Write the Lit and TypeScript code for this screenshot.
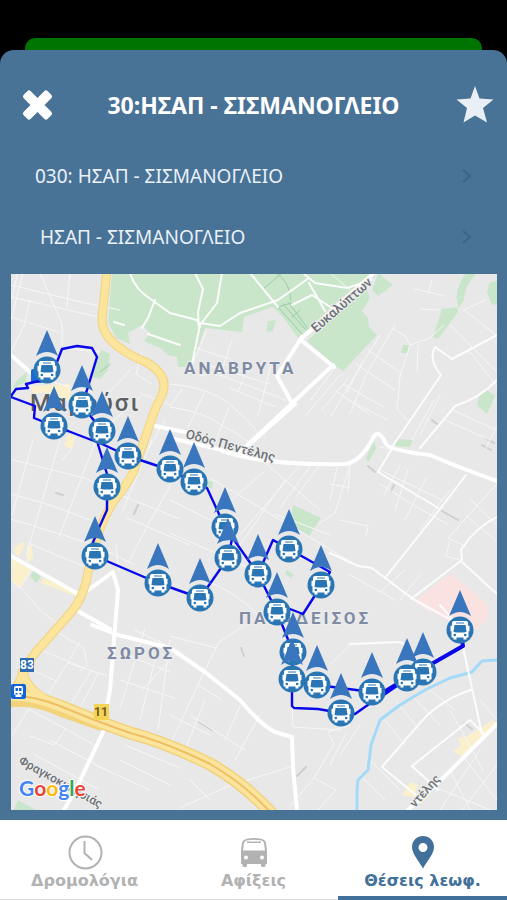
import { LitElement, html, css, svg } from "lit";
import { customElement, state } from "lit/decorators.js";

const PARKS = [
  "M112 273 L108 322 L116 338 L130 344 L128 333 L142 325 L150 333 L144 341 L160 348 L168 355 L177 357 L178 367 L191 367 L205 328 L242 332 L244 317 L273 307 L284 318 L298 338 L340 299 L374 273Z",
  "M307 341 L333 364 L343 371 L377 335 L369 327 L368 318 L362 311 L370 298 L366 288 L340 310Z",
  "M378 273 L393 285 L378 296 L372 290Z",
  "M466 273 Q452 292 459 308 L464 300 Q464 286 477 273Z",
  "M442 309 L457 307 L458 312 L438 339 L433 337Z",
  "M497 281 L490 282 L487 292 L492 305 L497 304Z",
  "M403 345 L409 345 L408 353 L401 353Z",
  "M479 396 L487 390 L495 396 L487 414 L477 405Z",
  "M398 439 L413 440 L410 447 L395 446Z",
  "M374 440 L376 449 L368 462 L366 458Z",
  "M293 505 L321 518 L309 536 L290 523Z",
  "M268 321 L276 320 L273 331 L266 332Z",
  "M101 350 L110 354 L108 370 L100 379 L89 377Z",
  "M17 380 L27 372 L26 382 L12 389Z",
  "M18 800 L36 810 L14 810Z",
  "M287 570 L294 575 L291 578 L285 574Z",
  "M207 480 L213 482 L212 489 L207 487Z",
  "M34 571 L41 577 L36 583 L30 576Z",
];

const PLACES = [
  "M30 386 L70 384 L70 400 L52 404 L46 392 L34 394Z",
  "M68 434 L76 437 L72 449 L64 446Z",
  "M11 558 L31 570 L20 588 L11 580Z",
  "M21 542 L25 543 L19 557 L13 551Z",
  "M27 547 L32 545 L33 557 L27 563Z",
  "M43 578 L80 592 L78 597 L41 583Z",
  "M493 720 L497 724 L464 757 L453 752 L461 746 L458 738 L466 737Z",
  "M410 782 L418 785 L414 797 L402 795Z",
  "M425 792 L431 794 L421 804 L416 802Z",
];

const LANES = [
  "M11 285 L85 303 L120 310 M11 297 L103 318 M18 273 L11 300 M40 273 L62 324 L62 345 M70 273 L67 306",
  "M23 273 L11 320 M11 352 L24 326 L30 300 M11 317 L58 332 M62 348 L100 352 M43 380 L92 392",
  "M11 494 L50 505 L90 520 M11 519 L95 545 L135 565 M13 460 L85 478 L118 494 L180 519",
  "M33 440 L12 515 M60 440 L26 556 M96 440 L59 537 M72 449 L62 460 M28 543 L85 567",
  "M127 518 L190 545 M152 440 L123 510 M180 468 L148 525 L128 563 M116 545 L119 572",
  "M11 581 L22 589 L40 610 L56 623 M20 588 L31 571 M44 651 L84 668 M80 642 L49 693",
  "M56 632 L84 648 L87 665 L80 671 M91 671 L72 702 M98 674 L81 706 M68 663 L107 676 M28 710 L11 737 M28 709 L66 729 L94 745",
  "M66 729 L54 745 L30 736 M32 670 L56 681",
  "M142 352 L136 374 L152 384 M130 370 L104 398 M170 405 L140 393 M165 420 L148 450 M142 395 L110 424",
  "M170 384 Q215 388 235 409 Q252 424 259 434 M182 389 L170 407 M204 393 L188 428 M229 407 L216 441",
  "M170 407 Q205 412 221 425 Q238 433 250 444 M350 290 L330 273 M277 375 L293 406",
  "M196 348 L230 359 M207 330 L193 362 M232 340 L222 370 L200 376 M250 360 L238 392 M271 365 L258 416 M220 375 L286 400 M230 388 L276 407 M210 366 L270 384",
  "M333 370 L310 401 M340 375 L306 415 M347 380 L322 410 M356 364 L395 390 M368 350 L402 374 M380 335 L354 377 L331 416 M395 325 L366 375 L350 414",
  "M343 384 L384 407 M335 390 L370 415 M348 400 L388 420 M362 363 L347 392 M392 328 L405 336 L410 345 L400 376 L397 409 L410 423",
  "M410 345 L430 338 L444 325 M450 325 L497 372 M464 310 L497 336 M463 310 L486 300 M470 352 L497 386",
  "M418 345 L417 372 M415 289 L445 296 M420 309 L440 310 M428 294 L432 280 M434 400 L412 440 M440 395 L420 435",
  "M452 410 L497 430 M445 420 L490 440 M420 456 L380 447 M500 420 L486 448 M380 470 L442 500 M400 465 L384 495",
  "M408 470 L395 510 M426 478 L405 520 M380 484 L415 506 L447 524 M450 490 L420 530 M497 484 L448 538 L465 546",
  "M338 464 L330 500 M350 465 L348 492 M330 484 L350 488 M340 520 L368 526 L366 535 M450 540 L446 556 L460 560",
  "M300 465 L240 535 M311 465 L280 508 M320 465 L296 497 M250 450 L320 510 M210 478 L348 560 M285 480 L240 545 M264 472 L225 505",
  "M350 465 L335 513 L318 524 M275 514 L330 535 M170 533 L245 566 M200 579 Q235 590 258 615 M170 500 L210 520",
  "M245 625 L218 643 L216 648 L204 672 L178 728 L170 744 M216 648 L170 636 M198 685 L222 700",
  "M292 705 L293 727 L340 730 M350 725 L328 732 L334 744 L314 778 L290 806 M314 778 L336 790 L318 810",
  "M293 766 L226 787 L180 808 M240 706 L225 740 M260 715 L235 760 M205 700 L185 750 M190 715 L245 750 M170 715 L210 735",
  "M135 630 L180 652 M127 655 L170 672 M120 680 L175 698 M160 640 L140 720 M145 628 L120 708 M170 640 L158 730",
  "M175 655 L142 690 M120 760 L170 785 M125 745 L180 768 M95 765 L150 790 M35 755 L98 789 M50 740 L110 772 M190 780 L210 800",
  "M330 665 L350 645 M345 735 L330 765 M360 725 L340 755 M397 703 L420 730 M415 699 L440 725 M430 690 L455 710",
  "M385 720 L405 745 M370 760 L400 790 M360 775 L385 800 M450 710 L483 770 M480 700 L497 720",
  "M450 770 L470 810 M463 756 L497 800 M480 750 L440 810 M497 765 L462 810 M430 785 L490 810",
  "M420 575 L400 600 M405 570 L380 592 M350 575 L395 600 M410 595 L430 612 M465 515 L495 540 M471 500 L497 525",
];

const STREETS = [
  "M130 273 Q135 290 152 300 L170 313 M170 313 L197 320 L200 327 M195 273 L203 289 L198 312 L199 330 L192 364 M222 273 L217 303 L200 325",
  "M250 273 L278 307 M200 323 L220 326 L240 313 L278 300 L309 278 M292 305 L312 295 L338 312 M309 283 L325 311 M303 273 L315 283 L347 288 L372 280",
  "M155 300 L148 318 L142 328 M148 334 L180 345 M114 322 L124 325",
  "M435 347 L452 359 L497 335 M435 347 Q428 360 441 375 L392 447 M497 380 Q480 398 455 406 L420 448",
  "M393 447 L378 472 L440 509 M466 475 L440 509 L385 578 M330 553 L358 566 L372 568 L413 599 L455 622",
  "M411 599 L462 560 L461 550 Q475 528 497 517 M462 562 L497 594 M455 622 L440 605 M350 644 L400 642 L412 650",
  "M463 647 L482 734 M471 690 Q440 700 420 723 L382 767 L416 795 M483 733 L470 720 L412 766 L438 790",
];

const AVENUES = [
  "M170 438 L222 450",
  "M222 451 Q270 466 345 464 Q360 462 372 440 Q378 426 386 444 Q390 450 430 455 Q455 466 497 481",
  "M250 444 L295 404 M240 452 L333 365 M293 405 L277 376 L302 337",
  "M299 341 L377 270 M302 341 L334 367",
  "M80 596 L113 572 L118 590 L110 690 L104 722",
  "M170 648 L205 672 L240 700 Q262 726 275 732 L292 737 L293 768 L297 810",
  "M92 625 L118 635 L170 648 M103 732 L78 785 L64 810",
  "M11 556 L80 595 M76 610 L110 629",
  "M497 724 L438 783 L408 810",
  "M11 355 L31 373 M150 425 L185 432",
];

const MOTORWAY = "M5 696 Q30 694 60 706 Q95 721 130 733 Q165 742 210 764 Q245 784 272 814";
const ARTERY =
  "M107 270 L102 318 Q101 333 117 346 Q130 356 146 362 Q170 376 162 395 Q154 410 148 430 Q138 458 134 471 Q126 486 116 498 Q101 520 95 545 L88 572 Q84 600 66 618 L44 643 Q31 656 24 672 L14 692";

const ROUTE = [
  "M39 381 L26 384 L28 388 L16 389 L11 396",
  "M11 397 L35 406 L34 418 L54 426 L68 431 L102 444 L128 456 L170 470 L194 482 L207 488 L225 527 L258 574 L277 612 L293 652 L292 679 L292 706 L294 708 L318 709 L341 713 L355 714 L372 702",
  "M47 370 L57 362 L62 349 L77 346 L92 348 L97 357 L87 390 L82 405 L102 431 L97 441 L107 474 L107 510 L98 530 L92 545 L95 556 L158 583 L200 598 L228 558 L232 539",
  "M258 574 L273 540 L289 549 L330 572 L303 614 L277 604 M317 685 L372 692",
];
const ROUTE_THICK = "M372 702 L407 678 L463 646 L460 630 M384 692 L407 678";

const STOPS: [number, number][] = [
  [47, 370], [82, 405], [54, 426], [102, 431], [128, 456],
  [170, 469], [194, 482], [107, 487], [225, 527], [289, 549],
  [95, 556], [228, 558], [258, 574], [158, 583], [321, 585],
  [200, 598], [277, 612], [460, 630], [293, 652], [423, 672],
  [407, 678], [292, 679], [317, 685], [372, 692], [341, 713],
];

const strokes = (cls: string, list: string[]) => svg`<path class=${cls} d=${list.join(" ")} />`;

@customElement("route-map")
class RouteMap extends LitElement {
  static styles = css`
    :host { display: block; }
    svg { display: block; width: 100%; height: auto; background: #e8e8e8; }
    path { stroke-linejoin: round; stroke-linecap: round; }
    .park { fill: #c9e6cb; }
    .place { fill: #faf1cc; }
    .hospital { fill: #fae2e0; }
    .lane, .street, .avenue, .artery-edge, .artery, .median, .river, .route, .route-thick, .path, .block { fill: none; }
    .lane { stroke: #f7f7f7; stroke-width: 1; }
    .street { stroke: #fcfcfc; stroke-width: 2; }
    .avenue { stroke: #fff; stroke-width: 4; }
    .artery-edge { stroke: #f3d27c; stroke-width: 9; }
    .artery { stroke: #fbe59c; stroke-width: 7; }
    .wide.artery-edge { stroke-width: 13; }
    .wide.artery { stroke-width: 10; }
    .median { stroke: #eebf66; stroke-width: 2; }
    .river { stroke: #a3daf8; stroke-width: 3; }
    .path { stroke: #9acda5; stroke-width: 1; }
    .block { stroke: #cfcfcf; stroke-width: 2; }
    .route { stroke: #0808ea; stroke-width: 2.4; }
    .route-thick { stroke: #0808ea; stroke-width: 4; }
    .disc { fill: #2a76b5; }
    .arrow { fill: #3976bd; }
    .bus { fill: #fff; }
    text { font-family: Roboto, "Noto Sans", sans-serif; stroke: #eeeeee; stroke-width: 2; paint-order: stroke; stroke-linejoin: round; }
    .area { font-size: 17px; font-weight: 700; letter-spacing: 3px; fill: #7e8ba4; }
    .town { font-size: 24px; font-weight: 500; letter-spacing: 2px; fill: #5c5f63; }
    .road { font-size: 12px; font-weight: 500; fill: #6b7176; }
    .road.large { font-size: 13px; }
    .shield { font-size: 12px; font-weight: 700; stroke: none; text-anchor: middle; }
    .light { fill: #fff; }
    .dark { fill: #6a5b22; }
    .logo { font-family: Lato, sans-serif; font-size: 21px; font-weight: 700; stroke: #fff; stroke-width: 2; }
    .b { fill: #4285f4; } .r { fill: #ea4335; } .y { fill: #fbbc05; } .g { fill: #34a853; }
  `;

  render() {
    return html`
      <svg viewBox="11 274 486 536" role="img" aria-label="Χάρτης διαδρομής">
        <defs>
          <g id="stop">
            <path class="arrow" d="M0 -40 L11 -14 Q5 -18 0 -18 Q-5 -18 -11 -14Z" />
            <circle class="disc" r="13.5" />
            <path class="bus" fill-rule="evenodd"
              d="M-6 -9 H6 Q8 -9 8 -7 V-4.5 L9.5 -4 V1 L8.500 1.500 V7.500 H6.500 V9.500 H3.500 V7.500 H-3.500 V9.500 H-6.500 V7.500 H-8.500 V1.500 L-9.500 1 V-4 L-8 -4.500 V-7 Q-8 -9 -6 -9Z M-4 -7.500 V-6.500 H4 V-7.500Z M-5.500 -5 L-6.500 2 Q0 3 6.500 2 L5.500 -5Z M-6.500 5 a1.300 1.300 0 1 0 2.600 0 a1.300 1.300 0 1 0 -2.600 0Z M3.900 5 a1.300 1.300 0 1 0 2.600 0 a1.300 1.300 0 1 0 -2.600 0Z" />
          </g>
        </defs>
        ${strokes("park", PARKS)} ${strokes("place", PLACES)}
        <path class="hospital" d="M450 573 L488 605 L487 618 L478 630 L450 622 L414 602Z" />
        <path class="block" d="M56 493 L63 495 M134 514 L138 505 M199 722 L212 730 M297 776 L306 767 M442 511 L458 520 M368 466 L375 472 M391 491 L394 485 M432 420 L437 424 M464 723 L472 729 M482 445 L491 450 M485 438 L494 443 M241 648 L244 656" />
        <path class="path" d="M278 307 L302 334 M283 304 L306 330 M289 303 L308 329 M278 307 L291 303 M292 317 L300 310 M262 290 L282 273 M276 273 Q289 280 291 300 M110 364 L100 372" />
        ${strokes("lane", LANES)}
        <path class="river" d="M357 812 L357 790 L358 780 L368 770 L371 745 L380 720 L400 705 L425 690 L450 678 L472 672 L482 661 L497 660" />
        ${strokes("street", STREETS)} ${strokes("avenue", AVENUES)}
        <path class="artery-edge" d=${ARTERY} /><path class="artery-edge wide" d=${MOTORWAY} />
        <path class="artery-edge" d="M22 672 Q30 693 50 701 M5 704 Q30 698 60 712 L100 726" />
        <path class="artery" d=${ARTERY} /><path class="artery wide" d=${MOTORWAY} />
        <path class="artery" d="M22 672 Q30 693 50 701" />
        <path class="median" d=${MOTORWAY} />

        <rect x="31" y="369" width="12" height="14" rx="2" fill="#1868d8" />
        <text class="area" x="184" y="374">ΑΝΑΒΡΥΤΑ</text>
        <text class="area" x="239" y="624">ΠΑΡΑΔΕΙΣΟΣ</text>
        <text class="area" x="107" y="659">ΣΩΡΟΣ</text>
        <text class="town" x="30" y="411">Μαρούσι</text>
        <text class="road large" transform="translate(316 333) rotate(-41)">Ευκαλύπτων</text>
        <text class="road large" transform="translate(185 438) rotate(15)">Οδός Πεντέλης</text>
        <text class="road" transform="translate(18 763) rotate(29)">Φραγκοκκλησιάς</text>
        <text class="road" transform="translate(415 808) rotate(-48)">ντέλης</text>

        <rect x="20" y="658" width="14" height="14" fill="#2f6db3" />
        <text class="shield light" x="27" y="669">83</text>
        <rect x="94" y="704" width="15" height="16" fill="#f5d355" />
        <text class="shield dark" x="101" y="716">11</text>
        <rect x="11" y="684" width="15" height="15" rx="2" fill="#1262d8" />
        <path class="bus" fill-rule="evenodd" d="M16 686 H21 Q23 686 23 688 V694 L21 696 L22 697 H15 L16 696 L14 694 V688 Q14 686 16 686Z M15.500 688 V691 H18 V688Z M19 688 V691 H21.500 V688Z M15.500 693 h2 v1.500 h-2Z M19.500 693 h2 v1.500 h-2Z" />

        ${strokes("route", ROUTE)}
        <path class="route-thick" d=${ROUTE_THICK} />
        ${STOPS.map(([x, y]) => svg`<use href="#stop" x=${x} y=${y} />`)}
        <text class="logo" x="19" y="796"><tspan class="b">G</tspan><tspan class="r">o</tspan><tspan class="y">o</tspan><tspan class="b">g</tspan><tspan class="g">l</tspan><tspan class="r">e</tspan></text>
      </svg>
    `;
  }
}

const ICONS = {
  clock: svg`<circle cx="18.500" cy="18.500" r="16" fill="none" stroke="currentColor" stroke-width="2" /><path d="M17.500 7 V19 L25 26" fill="none" stroke="currentColor" stroke-width="2" />`,
  bus: svg`<path fill="currentColor" fill-rule="evenodd" d="M10 5 Q18 3 26 5 Q29.500 6 30 9 L31 17 V30 H29.500 V31.500 Q29.500 33 28 33 H26.500 Q25 33 25 31.500 V30 H11 V31.500 Q11 33 9.500 33 H8 Q6.500 33 6.500 31.500 V30 H5 V17 L6 9 Q6.500 6 10 5Z M10.500 6.500 Q8.500 7 8 9 L7 16.500 H29 L28 9 Q27.500 7 25.500 6.500 Q18 5 10.500 6.500Z M8 23.500 a2 2 0 1 0 4 0 a2 2 0 1 0 -4 0Z M24 23.500 a2 2 0 1 0 4 0 a2 2 0 1 0 -4 0Z M11 7.500 H25 V9 H11Z" />`,
  pin: svg`<path fill="currentColor" fill-rule="evenodd" d="M18 2 C24 2 29 6.500 29 13 C29 20 22 27 18 34.500 C14 27 7 20 7 13 C7 6.500 12 2 18 2Z M13.500 13.500 a4.500 4.500 0 1 0 9 0 a4.500 4.500 0 1 0 -9 0Z" />`,
};

const TABS: { icon: keyof typeof ICONS; label: string }[] = [
  { icon: "clock", label: "Δρομολόγια" },
  { icon: "bus", label: "Αφίξεις" },
  { icon: "pin", label: "Θέσεις λεωφ." },
];

@customElement("app-root")
class AppRoot extends LitElement {
  @state() private tab = 2;

  static styles = css`
    :host {
      display: flex;
      flex-direction: column;
      min-height: 100vh;
      box-sizing: border-box;
      padding-top: 38px;
      background: #000;
      font-family: "Noto Sans", sans-serif;
      color: #fff;
    }
    button { border: 0; margin: 0; background: none; color: inherit; font: inherit; cursor: pointer; }
    .behind { height: 24px; margin: 0 25px -12px; border-radius: 10px 10px 0 0; background: #007400; }
    .sheet {
      flex: 1;
      display: flex;
      flex-direction: column;
      border-radius: 14px 14px 0 0;
      background: #487397;
      padding-bottom: 10px;
    }
    header {
      display: grid;
      grid-template-columns: 52px 1fr 52px;
      align-items: center;
      height: 81px;
      padding: 14px 6px 0;
    }
    header button { display: flex; justify-content: center; padding: 0; }
    h1 { margin: 0; font-size: 23px; line-height: 28px; font-weight: 700; text-align: center; white-space: nowrap; }
    .row {
      display: flex;
      align-items: center;
      justify-content: space-between;
      height: 61px;
      padding: 0 35px;
      font-size: 19px;
      line-height: 24px;
      color: #eaf1f8;
      white-space: pre;
      text-align: left;
    }
    .chevron { fill: none; stroke: #3c6487; stroke-width: 2; }
    route-map { margin: 7px 10px 0 11px; }
    nav { display: flex; height: 80px; background: #fff; }
    .tab {
      flex: 1;
      display: flex;
      flex-direction: column;
      align-items: center;
      padding: 14px 0 0;
      border-bottom: 1px solid #ddd;
      color: #b2b2b2;
      font-family: "DejaVu Sans", sans-serif;
      font-size: 16px;
      line-height: 22px;
      font-weight: 700;
      white-space: nowrap;
    }
    .tab[aria-selected="true"] { color: #41709a; border-bottom: 4px solid #41709a; }
  `;

  render() {
    return html`
      <div class="behind"></div>
      <main class="sheet">
        <header>
          <button aria-label="Κλείσιμο">
            <svg width="52" height="36" viewBox="0 0 52 36">
              <g fill="#fff">
                <rect x="14.500" y="13" width="34" height="10" rx="2.500" transform="rotate(45 31.500 18)" />
                <rect x="14.500" y="13" width="34" height="10" rx="2.500" transform="rotate(-45 31.500 18)" />
              </g>
            </svg>
          </button>
          <h1>30:ΗΣΑΠ - ΣΙΣΜΑΝΟΓΛΕΙΟ</h1>
          <button aria-label="Αγαπημένα">
            <svg width="38" height="38" viewBox="0 0 38 38">
              <path fill="#e9eff4" d="M19 0 L23.500 12.500 L37.500 13.500 L27 22 L31 36.500 L19 29.500 L7.500 36.500 L11 22 L0.500 13.500 L14.500 12.500Z" />
            </svg>
          </button>
        </header>
        ${["030: ΗΣΑΠ - ΣΙΣΜΑΝΟΓΛΕΙΟ", " ΗΣΑΠ - ΣΙΣΜΑΝΟΓΛΕΙΟ"].map(
          (name) => html`<button class="row"><span>${name}</span><svg width="10" height="14" viewBox="0 0 10 14"><path class="chevron" d="M1 1 L8 7 L1 13" /></svg></button>`
        )}
        <route-map></route-map>
      </main>
      <nav role="tablist">
        ${TABS.map(
          (t, i) => html`<button class="tab" role="tab" aria-selected=${i === this.tab} @click=${() => (this.tab = i)}>
            <svg width="36" height="36" viewBox="0 0 36 36">${ICONS[t.icon]}</svg>
            <span>${t.label}</span>
          </button>`
        )}
      </nav>
    `;
  }
}
